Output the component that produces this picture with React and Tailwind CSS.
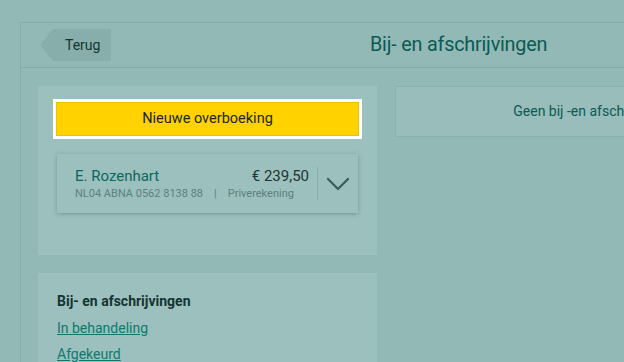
import React from 'react';
import { ChevronDown } from 'lucide-react';

const font = { fontFamily: 'Roboto, "Open Sans", sans-serif' };

const AccountCard = () => (
  <div className="mx-[4px] mt-[15px] h-[59px] flex items-stretch bg-[#9bc0bd] shadow-[0_1px_4px_rgba(40,80,78,0.35)]">
    <div className="flex-1 pl-[18px] pr-[8px] flex flex-col justify-center">
      <div className="flex items-baseline justify-between">
        <span className="text-[15px] leading-[18px] text-[#0d675f]">E. Rozenhart</span>
        <span className="text-[15px] leading-[18px] text-[#1d3533]">€ 239,50</span>
      </div>
      <div className="text-[11px] leading-[14px] text-[#5e817e] mt-[2px]">
        NL04 ABNA 0562 8138 88<span className="px-[11px]">|</span>Priverekening
      </div>
    </div>
    <div className="w-[41px] flex items-center justify-center my-[13px] border-l border-[#88adaa]">
      <ChevronDown size={40} strokeWidth={1.4} className="text-[#3f5e5b]" />
    </div>
  </div>
);

export default function App() {
  return (
    <div className="w-[624px] h-[362px] overflow-hidden bg-[#93b9b6] pt-[22px] pl-[20px]" style={font}>
      <div className="w-[900px] h-[400px] border-l border-t border-[#86acaa]">
        <div className="h-[45px] flex items-center border-b border-[#87adaa] pl-[19px]">
          <button className="w-[71px] h-[32px] bg-[#87aeab] pl-[25px] text-left text-[14px] text-[#143432] [clip-path:polygon(13px_0,100%_0,100%_100%,13px_100%,0_50%)]">
            Terug
          </button>
          <h1 className="ml-[259px] text-[21px] text-[#0b5a54] tracking-[-0.2px] origin-left scale-x-[0.94]">
            Bij- en afschrijvingen
          </h1>
        </div>
        <div className="flex gap-[18px] pt-[18px] pl-[17px]">
          <div className="w-[339px] flex flex-col gap-[18px]">
            <div className="h-[169px] bg-[#9bc0bd] px-[15px] pt-[13px]">
              <div className="border-[3px] border-white">
                <button className="w-full h-[34px] bg-[#ffd200] border border-[#e9c200] text-[14.5px] text-[#1a2523]">
                  Nieuwe overboeking
                </button>
              </div>
              <AccountCard />
            </div>
            <div className="bg-[#9bc0bd] pl-[19px] pt-[19px] pb-4">
              <div className="text-[14px] font-bold text-[#143432] leading-[18px]">Bij- en afschrijvingen</div>
              <a href="#" className="block mt-[9px] text-[14px] leading-[18px] text-[#0c7a6f] underline">In behandeling</a>
              <a href="#" className="block mt-[8px] text-[14px] leading-[18px] text-[#0c7a6f] underline">Afgekeurd</a>
            </div>
          </div>
          <div className="w-[464px] h-[51px] border border-[#8cb2af] bg-[#98bdba] flex items-center justify-center text-[14px] text-[#0b5a54]">
            Geen bij -en afschrijvingen gevonden
          </div>
        </div>
      </div>
    </div>
  );
}
